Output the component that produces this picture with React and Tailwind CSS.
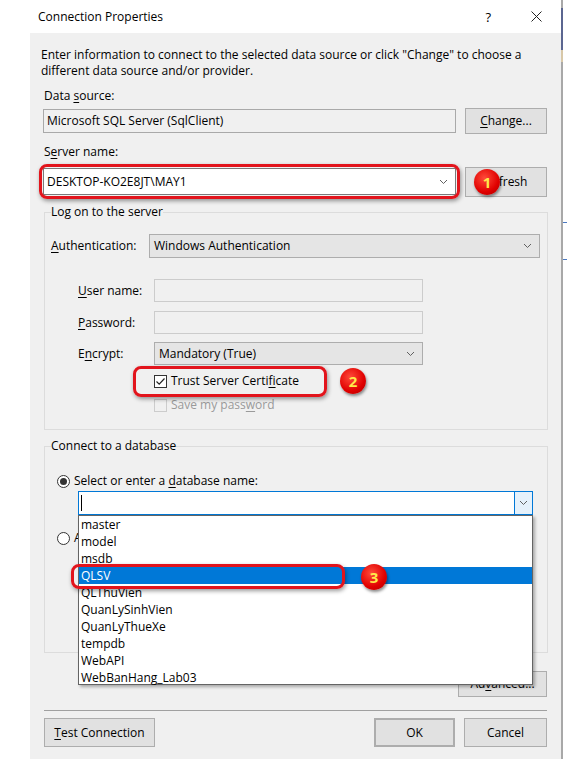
import React from 'react';

const Chevron = ({ className = '' }) => (
  <svg width="9" height="6" viewBox="0 0 9 6" className={className}>
    <polyline points="1,1 4.5,4.5 8,1" fill="none" stroke="#606060" strokeWidth="1" />
  </svg>
);

const Badge = ({ n, className = '' }) => (
  <div
    className={`absolute w-[26px] h-[26px] rounded-full flex items-center justify-center bg-[radial-gradient(circle_at_40%_35%,#ff4a3a,#e00000_60%,#a80000)] shadow-[1px_2px_3px_rgba(0,0,0,0.45)] text-[#ffe94a] font-bold text-[15px] leading-none ${className}`}
  >
    {n}
  </div>
);

const Highlight = ({ className = '' }) => (
  <div
    className={`absolute border-[3px] border-[#e2141c] rounded-[8px] shadow-[1px_2px_4px_rgba(0,0,0,0.4)] pointer-events-none ${className}`}
  />
);

const U = ({ children }) => <span className="underline underline-offset-2">{children}</span>;

const WinButton = ({ children, className = '' }) => (
  <div
    className={`flex items-center justify-center bg-[#e1e1e1] border border-[#adadad] ${className}`}
  >
    {children}
  </div>
);

const databases = [
  'master',
  'model',
  'msdb',
  'QLSV',
  'QLThuVien',
  'QuanLySinhVien',
  'QuanLyThueXe',
  'tempdb',
  'WebAPI',
  'WebBanHang_Lab03',
];

export default function App() {
  return (
    <div className="w-[576px] h-[759px] bg-white flex overflow-hidden font-['Open_Sans','Noto_Sans',sans-serif] text-[12px] leading-[16px] text-black">
      <div className="w-[30px] shrink-0" />

      <div className="w-[531px] shrink-0 flex flex-col">
        {/* title bar */}
        <div className="h-[33px] bg-white flex items-center pl-[8px] pr-[19px]">
          <span>Connection Properties</span>
          <span className="ml-auto text-[13px]">?</span>
          <svg width="11" height="11" viewBox="0 0 11 11" className="ml-[40px]">
            <path d="M0.5 0.5 L10.5 10.5 M10.5 0.5 L0.5 10.5" stroke="#222" strokeWidth="1" />
          </svg>
        </div>

        {/* body */}
        <div className="flex-1 bg-[#f0f0f0] flex flex-col pl-[11px] pr-[14px] pt-[14px]">
          <p>
            Enter information to connect to the selected data source or click "Change" to choose a
            <br />
            different data source and/or provider.
          </p>

          <div className="mt-[9px] pl-[3px]">
            Data <U>s</U>ource:
          </div>
          <div className="mt-[4px] h-[26px] flex items-center">
            <div className="ml-[2px] w-[413px] h-[24px] border border-[#a9a9a9] bg-[#f0f0f0] flex items-center pl-[3px]">
              Microsoft SQL Server (SqlClient)
            </div>
            <WinButton className="ml-auto w-[82px] h-[26px]">
              <span>
                <U>C</U>hange...
              </span>
            </WinButton>
          </div>

          <div className="mt-[10px] pl-[3px]">
            S<U>e</U>rver name:
          </div>
          <div className="mt-[6px] h-[31px] flex items-center relative">
            <div className="relative ml-[2px] w-[413px] h-[27px] border border-[#7a7a7a] bg-white flex items-center pl-[3px] pr-[7px]">
              <span>DESKTOP-KO2E8JT\MAY1</span>
              <Chevron className="ml-auto" />
              <Highlight className="-left-[5px] -top-[5px] -right-[5px] -bottom-[5px]" />
            </div>
            <WinButton className="ml-auto w-[82px] h-[30px]">
              <span>
                <U>R</U>efresh
              </span>
            </WinButton>
            <Badge n="1" className="left-[433px] top-[3px]" />
          </div>

          {/* Log on to the server */}
          <fieldset className="mt-[7px] ml-[3px] -mr-[1px] border border-[#dcdcdc] pl-[6px] pr-[7px] pb-[16px]">
            <legend className="px-0 leading-[16px]">Log on to the server</legend>

            <div className="mt-[14px] flex items-center h-[24px]">
              <span className="w-[98px]">
                <U>A</U>uthentication:
              </span>
              <div className="flex-1 h-[24px] border border-[#adadad] bg-[#e5e5e5] flex items-center pl-[4px] pr-[7px]">
                <span>Windows Authentication</span>
                <Chevron className="ml-auto" />
              </div>
            </div>

            <div className="mt-[21px] flex items-center h-[23px] pl-[27px]">
              <span className="w-[76px]">
                <U>U</U>ser name:
              </span>
              <div className="w-[269px] h-[23px] border border-[#cccccc] bg-[#f0f0f0]" />
            </div>

            <div className="mt-[9px] flex items-center h-[23px] pl-[27px]">
              <span className="w-[76px]">
                <U>P</U>assword:
              </span>
              <div className="w-[269px] h-[23px] border border-[#cccccc] bg-[#f0f0f0]" />
            </div>

            <div className="mt-[8px] flex items-center h-[23px] pl-[27px]">
              <span className="w-[76px]">
                E<U>n</U>crypt:
              </span>
              <div className="w-[269px] h-[23px] border border-[#adadad] bg-[#e5e5e5] flex items-center pl-[4px] pr-[7px]">
                <span>Mandatory (True)</span>
                <Chevron className="ml-auto" />
              </div>
            </div>

            <div className="mt-[8px] h-[16px] flex items-center pl-[103px] relative">
              <div className="w-[13px] h-[13px] border border-[#333] bg-white flex items-center justify-center">
                <svg width="11" height="11" viewBox="0 0 11 11">
                  <polyline points="1.5,5.5 4.2,8.2 9.5,2.5" fill="none" stroke="#222" strokeWidth="1.2" />
                </svg>
              </div>
              <span className="ml-[4px]">
                Trust Server Certi<U>f</U>icate
              </span>
              <Highlight className="left-[82px] -top-[7px] w-[194px] h-[31px]" />
              <Badge n="2" className="left-[289px] -top-[5px] w-[24px] h-[24px] text-[14px]" />
            </div>

            <div className="mt-[8px] h-[16px] flex items-center pl-[103px] text-[#9a9a9a]">
              <div className="w-[13px] h-[13px] border border-[#cccccc] bg-[#f0f0f0]" />
              <span className="ml-[4px]">
                Save my pass<U>w</U>ord
              </span>
            </div>
          </fieldset>

          {/* Connect to a database */}
          <fieldset className="mt-[8px] ml-[3px] -mr-[1px] border border-[#dcdcdc] pl-[6px] pr-[7px] pb-[106px]">
            <legend className="px-0 leading-[16px]">Connect to a database</legend>

            <div className="mt-[19px] h-[16px] flex items-center pl-[6px]">
              <div className="w-[13px] h-[13px] rounded-full border border-[#333] bg-white flex items-center justify-center">
                <div className="w-[7px] h-[7px] rounded-full bg-[#333]" />
              </div>
              <span className="ml-[4px]">
                Select or enter a <U>d</U>atabase name:
              </span>
            </div>

            <div className="relative mt-[2px] ml-[27px] w-[455px] h-[24px] border border-[#0078d7] bg-white flex items-center">
              <div className="ml-[2px] w-px h-[16px] bg-black" />
              <div className="ml-auto w-[18px] h-full border-l border-[#0078d7] bg-[#e5f1fb] flex items-center justify-center">
                <Chevron />
              </div>

              {/* open dropdown list */}
              <div className="absolute left-[-1px] top-[23px] w-[455px] h-[170px] bg-white border border-[#646464] shadow-[2px_2px_3px_rgba(0,0,0,0.3)] z-10">
                <div className="relative flex flex-col">
                  {databases.map((db) => (
                    <div
                      key={db}
                      className={`h-[17px] pl-[2px] flex items-center ${
                        db === 'QLSV' ? 'bg-[#0078d7] text-white' : ''
                      }`}
                    >
                      {db}
                    </div>
                  ))}
                  <Highlight className="-left-[8px] top-[48px] w-[274px] h-[25px]" />
                  <Badge n="3" className="left-[282px] top-[48px] w-[25px] h-[25px] text-[14px]" />
                </div>
              </div>
            </div>

            <div className="mt-[15px] h-[16px] flex items-center pl-[6px]">
              <div className="w-[13px] h-[13px] rounded-full border border-[#333] bg-white" />
              <span className="ml-[4px]">Attach a database file:</span>
            </div>
          </fieldset>

          <WinButton className="self-end mt-[18px] w-[89px] h-[26px]">
            <span>
              Ad<U>v</U>anced...
            </span>
          </WinButton>

          <div className="mt-[13px] ml-[3px] h-px bg-[#a0a0a0]" />

          <div className="mt-[7px] flex items-center h-[29px]">
            <WinButton className="ml-[3px] w-[111px] h-[29px]">
              <span>
                <U>T</U>est Connection
              </span>
            </WinButton>
            <WinButton className="ml-auto w-[81px] h-[29px] border-[#0078d7] border-2">
              <span>OK</span>
            </WinButton>
            <WinButton className="ml-[9px] w-[83px] h-[29px]">
              <span>Cancel</span>
            </WinButton>
          </div>
        </div>
      </div>

      <div className="w-[2px] shrink-0 flex flex-col bg-[#a8a8a8]">
        <div className="mt-[8px] h-[42px] bg-[#5b6690]" />
        <div className="h-[12px] bg-[#d8c8a8]" />
      </div>
      <div className="flex-1 bg-white flex flex-col">
        <div className="mt-[222px] w-[4px] h-px bg-[#4a78c0]" />
        <div className="mt-[36px] w-[4px] h-px bg-[#4a78c0]" />
      </div>
    </div>
  );
}
